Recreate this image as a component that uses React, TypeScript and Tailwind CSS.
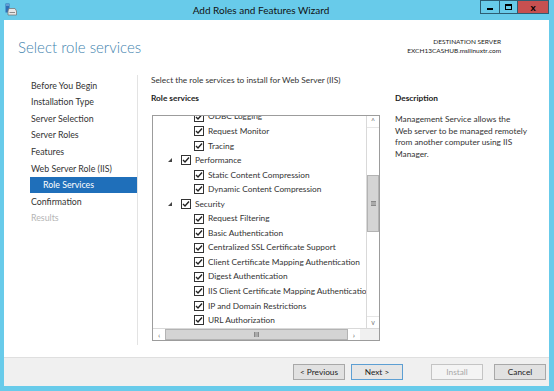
import React from "react"

const navItems = [
  { label: "Before You Begin" },
  { label: "Installation Type" },
  { label: "Server Selection" },
  { label: "Server Roles" },
  { label: "Features" },
  { label: "Web Server Role (IIS)" },
  { label: "Role Services", active: true },
  { label: "Confirmation" },
  { label: "Results", disabled: true },
]

type Row = { label: string; level: 1 | 2 }

const rows: Row[] = [
  { label: "ODBC Logging", level: 2 },
  { label: "Request Monitor", level: 2 },
  { label: "Tracing", level: 2 },
  { label: "Performance", level: 1 },
  { label: "Static Content Compression", level: 2 },
  { label: "Dynamic Content Compression", level: 2 },
  { label: "Security", level: 1 },
  { label: "Request Filtering", level: 2 },
  { label: "Basic Authentication", level: 2 },
  { label: "Centralized SSL Certificate Support", level: 2 },
  { label: "Client Certificate Mapping Authentication", level: 2 },
  { label: "Digest Authentication", level: 2 },
  { label: "IIS Client Certificate Mapping Authentication", level: 2 },
  { label: "IP and Domain Restrictions", level: 2 },
  { label: "URL Authorization", level: 2 },
]

const Check = () => (
  <span className="flex h-[10px] w-[10px] shrink-0 items-center justify-center border border-[#333] bg-white">
    <svg width="8" height="8" viewBox="0 0 8 8">
      <path d="M1 4 L3 6 L7 1.5" fill="none" stroke="#222" strokeWidth="1.4" />
    </svg>
  </span>
)

const AppIcon = () => (
  <svg width="12" height="13" viewBox="0 0 12 13">
    <rect x="0.5" y="0.5" width="4" height="9" fill="#2f6fb5" />
    <rect x="1" y="1.5" width="3" height="1" fill="#9ccaf0" />
    <path d="M3 8 L4 5.5 L10 5.5 L11.5 8 L11.5 12 L3 12 Z" fill="#e8e8e8" stroke="#7a7a7a" strokeWidth="0.8" />
    <rect x="4.5" y="9" width="5.5" height="1" fill="#8a8a8a" />
  </svg>
)

const Btn = ({ label, kind }: { label: string; kind?: "primary" | "disabled" }) => (
  <div
    className={
      kind === "primary"
        ? "flex h-[16px] w-[52px] items-center justify-center border border-[#5d9fd3] bg-[#e6e6e6] text-[#222]"
        : kind === "disabled"
        ? "flex h-[16px] w-[52px] items-center justify-center border border-[#c4c4c4] bg-[#f4f4f4] text-[#a8a8a8]"
        : "flex h-[16px] w-[52px] items-center justify-center border border-[#a8a8a8] bg-[#e1e1e1] text-[#222]"
    }
  >
    {label}
  </div>
)

export default function App() {
  return (
    <div
      className="flex h-[391px] w-[554px] flex-col bg-[#68cbea] text-[8.3px] text-[#333]"
      style={{ fontFamily: "Lato, 'Open Sans', sans-serif" }}
    >
      {/* title bar */}
      <div className="flex h-[20px] items-start">
        <div className="ml-[5px] mt-[3px] w-[12px]">
          <AppIcon />
        </div>
        <div className="flex h-[20px] flex-1 items-center justify-center pl-[25px] text-[10px] text-[#111]">
          Add Roles and Features Wizard
        </div>
        <div className="mr-[5px] flex h-[14px]">
          <div className="flex w-[20px] items-center justify-center border border-[#2d5d73] bg-[#68cbea]">
            <span className="mt-[3px] block h-[2px] w-[6px] bg-black" />
          </div>
          <div className="flex w-[18px] items-center justify-center border-y border-r border-[#2d5d73] bg-[#68cbea]">
            <span className="block h-[6px] w-[7px] border-[1.5px] border-t-2 border-black" />
          </div>
          <div className="flex w-[31px] items-center justify-center border-y border-r border-[#2d5d73] bg-[#c75050] text-[10px] font-bold text-black">
            x
          </div>
        </div>
      </div>

      {/* client */}
      <div className="mb-[5px] ml-[4px] mr-[5px] flex flex-1 flex-col bg-white">
        <div className="flex h-[52px] items-start justify-between pl-[14px] pr-[48px]">
          <div className="mt-[17px] text-[15px] font-light leading-[20px] text-[#3f83ae]">Select role services</div>
          <div className="mt-[17px] text-right text-[6.5px] leading-[9px] text-[#222]">
            <div>DESTINATION SERVER</div>
            <div>EXCH13CASHUB.msllinuxtr.com</div>
          </div>
        </div>

        <div className="flex flex-1">
          {/* nav */}
          <div className="w-[134px] shrink-0 pb-[15px] pl-[26px] text-[8.8px]">
            <div className="h-[3px]" />
            <div className="h-full border-r border-[#e3e3e3]">
              <div className="h-[2px]" />
              {navItems.map((n) => (
                <div
                  key={n.label}
                  className={
                    n.active
                      ? "flex h-[16.6px] items-center bg-[#1f6fba] pl-[13px] text-white"
                      : n.disabled
                      ? "flex h-[16.6px] items-center pl-[1px] text-[#b5b5b5]"
                      : "flex h-[16.6px] items-center pl-[1px]"
                  }
                >
                  {n.label}
                </div>
              ))}
            </div>
          </div>

          {/* main */}
          <div className="flex flex-1 flex-col pl-[13px]">
            <div className="mt-[1px] h-[14px] leading-[14px]">Select the role services to install for Web Server (IIS)</div>
            <div className="flex flex-1">
              <div className="flex w-[229px] flex-col">
                <div className="mt-[5px] h-[13px] font-bold leading-[13px] text-[#222]">Role services</div>
                <div className="ml-[1px] mt-[10px] flex h-[226px] flex-col border border-[#9c9c9c]">
                  <div className="flex flex-1 overflow-hidden">
                    <div className="flex-1 overflow-hidden">
                      <div className="-mt-[6.6px]">
                        {rows.map((r) => (
                          <div key={r.label} className="flex h-[14.55px] items-center whitespace-nowrap">
                            {r.level === 1 ? (
                              <>
                                <span className="ml-[15px] mr-[9px] block h-0 w-0 border-b-[4px] border-l-[4px] border-b-[#444] border-l-transparent" />
                                <Check />
                                <span className="ml-[4px]">{r.label}</span>
                              </>
                            ) : (
                              <>
                                <span className="ml-[41px]" />
                                <Check />
                                <span className="ml-[4px]">{r.label}</span>
                              </>
                            )}
                          </div>
                        ))}
                      </div>
                    </div>
                    {/* vertical scrollbar */}
                    <div className="flex w-[13px] shrink-0 flex-col border-l border-[#d9d9d9] bg-white">
                      <div className="flex h-[12px] items-center justify-center border-b border-[#e6e6e6] text-[7px] text-[#777]">^</div>
                      <div className="h-[47px]" />
                      <div className="flex h-[57px] items-center justify-center border border-[#b3b3b3] bg-[#d4d4d4]">
                        <span className="block h-[5px] w-[5px] border-y border-[#888] bg-[#aaa]" />
                      </div>
                      <div className="flex-1" />
                      <div className="flex h-[12px] items-center justify-center border-t border-[#e6e6e6] text-[7px] text-[#777]">v</div>
                    </div>
                  </div>
                  {/* horizontal scrollbar */}
                  <div className="flex h-[12px] shrink-0 border-t border-[#d9d9d9]">
                    <div className="flex w-[12px] items-center justify-center text-[8px] text-[#666]">‹</div>
                    <div className="flex w-[183px] items-center justify-center border border-[#b3b3b3] bg-[#d4d4d4]">
                      <span className="block h-[5px] w-[5px] border-x border-[#888] bg-[#aaa]" />
                    </div>
                    <div className="flex w-[12px] items-center justify-center text-[8px] text-[#666]">›</div>
                    <div className="flex-1 bg-[#f0f0f0]" />
                  </div>
                </div>
              </div>

              <div className="ml-[15px] flex-1">
                <div className="mt-[5px] h-[13px] font-bold leading-[13px] text-[#222]">Description</div>
                <div className="mt-[9px] leading-[11.5px]">
                  Management Service allows the
                  <br />
                  Web server to be managed remotely
                  <br />
                  from another computer using IIS
                  <br />
                  Manager.
                </div>
              </div>
            </div>
          </div>
        </div>

        {/* footer */}
        <div className="flex h-[29px] items-center gap-[6px] border-t border-[#dfdfdf] bg-[#f0f0f0] pl-[289px] text-[8.3px]">
          <Btn label="< Previous" />
          <Btn label="Next >" kind="primary" />
          <div className="w-[16px]" />
          <Btn label="Install" kind="disabled" />
          <div className="-ml-[1px]" />
          <Btn label="Cancel" />
        </div>
      </div>
    </div>
  )
}
